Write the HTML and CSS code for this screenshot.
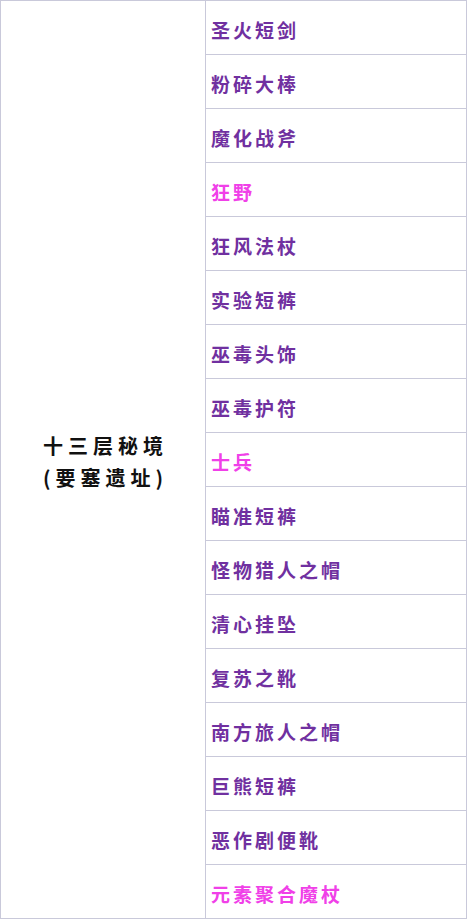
FILE: index.html
```html
<!DOCTYPE html>
<html lang="zh">
<head>
    <meta charset="UTF-8">
    <meta name="viewport" content="width=device-width, initial-scale=1.0">
    <title>掉落表</title>
    <link rel="stylesheet" href="styles.css">
</head>
<body>
    <table class="drop-table">
        <tr>
            <td class="area" rowspan="17">十三层秘境<br>(要塞遗址)</td>
            <td class="item">圣火短剑</td>
        </tr>
        <tr><td class="item">粉碎大棒</td></tr>
        <tr><td class="item">魔化战斧</td></tr>
        <tr><td class="item pink">狂野</td></tr>
        <tr><td class="item">狂风法杖</td></tr>
        <tr><td class="item">实验短裤</td></tr>
        <tr><td class="item">巫毒头饰</td></tr>
        <tr><td class="item">巫毒护符</td></tr>
        <tr><td class="item pink">士兵</td></tr>
        <tr><td class="item">瞄准短裤</td></tr>
        <tr><td class="item">怪物猎人之帽</td></tr>
        <tr><td class="item">清心挂坠</td></tr>
        <tr><td class="item">复苏之靴</td></tr>
        <tr><td class="item">南方旅人之帽</td></tr>
        <tr><td class="item">巨熊短裤</td></tr>
        <tr><td class="item">恶作剧便靴</td></tr>
        <tr><td class="item pink">元素聚合魔杖</td></tr>
    </table>
</body>
</html>
```

FILE: styles.css
```css
*{padding:0px;margin:0px;}

body{
    background:#fff;
    font-family:"Noto Sans CJK SC", sans-serif;
}

.drop-table{
    width:467px;
    border-collapse:collapse;
    table-layout:fixed;
}
.drop-table td{
    border:1px solid #c9c9da;
    box-sizing:border-box;
}
.area{
    width:205px;
    text-align:center;
    font-size:20px;
    font-weight:bold;
    line-height:32px;
    letter-spacing:5px;
    color:#111;
    padding:4px 0 0 5px;
}
.item{
    height:54px;
    padding:4px 0 0 5px;
    font-size:19px;
    font-weight:bold;
    letter-spacing:3px;
    color:#7030a0;
}
.item.pink{
    color:#f040e8;
}
```
